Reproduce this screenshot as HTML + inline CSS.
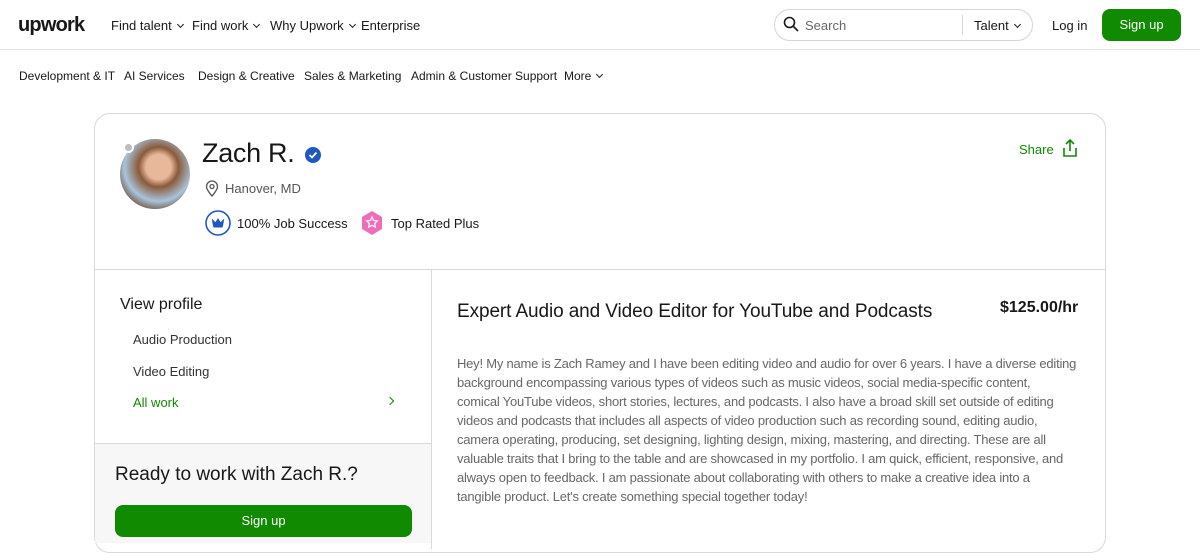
<!DOCTYPE html>
<html><head><meta charset="utf-8"><style>
*{box-sizing:border-box;margin:0;padding:0}
body{width:1200px;height:540px;overflow:hidden;background:#fff;font-family:"Liberation Sans",Arial,sans-serif;color:#181818;position:relative}
.a{position:absolute;white-space:nowrap}
.nav{font-size:13px;color:#181818}
.chev{display:inline-block;width:5px;height:5px;border-right:1.5px solid #181818;border-bottom:1.5px solid #181818;transform:rotate(45deg);margin-left:6px;vertical-align:3px}
</style></head><body>
<div class="a" style="left:18px;top:14px;font-size:20px;font-weight:bold;letter-spacing:-0.8px">upwork</div>
<div class="a nav" style="left:111px;top:18px">Find talent<span class="chev"></span></div>
<div class="a nav" style="left:192px;top:18px">Find work<span class="chev"></span></div>
<div class="a nav" style="left:270px;top:18px">Why Upwork<span class="chev"></span></div>
<div class="a nav" style="left:361px;top:18px">Enterprise</div>
<div class="a" style="left:774px;top:9px;width:259px;height:32px;border:1px solid #d5d5d5;border-radius:16px"></div>
<svg class="a" style="left:783px;top:16px" width="16" height="16" viewBox="0 0 16 16"><circle cx="6.5" cy="6.5" r="5" fill="none" stroke="#181818" stroke-width="1.6"/><path d="M10.5 10.5L15 15" stroke="#181818" stroke-width="1.6"/></svg>
<div class="a nav" style="left:805px;top:18px;color:#676767">Search</div>
<div class="a" style="left:962px;top:15px;width:1px;height:20px;background:#d5d5d5"></div>
<div class="a nav" style="left:974px;top:18px">Talent<span class="chev"></span></div>
<div class="a nav" style="left:1052px;top:18px">Log in</div>
<div class="a" style="left:1102px;top:9px;width:79px;height:32px;background:#108a00;border-radius:8px;color:#fff;font-size:13px;text-align:center;line-height:32px">Sign up</div>
<div class="a" style="left:0;top:49px;width:1200px;height:1px;background:#e4e4e4"></div>
<div class="a nav" style="left:19px;top:69px;font-size:12px">Development &amp; IT</div>
<div class="a nav" style="left:124px;top:69px;font-size:12px">AI Services</div>
<div class="a nav" style="left:198px;top:69px;font-size:12px">Design &amp; Creative</div>
<div class="a nav" style="left:304px;top:69px;font-size:12px">Sales &amp; Marketing</div>
<div class="a nav" style="left:411px;top:69px;font-size:12px">Admin &amp; Customer Support</div>
<div class="a nav" style="left:564px;top:69px;font-size:12px">More<span class="chev"></span></div>

<div class="a" style="left:94px;top:113px;width:1012px;height:440px;border:1px solid #d9d9d9;border-radius:16px"></div>
<div class="a" style="left:120px;top:139px;width:70px;height:70px;border-radius:50%;background:radial-gradient(circle at 55% 40%,#e8b89a 0 22%,#8a5a3a 35%,#a8c4dc 60%,#6b4a30 80%)"></div>
<div class="a" style="left:123px;top:142px;width:11px;height:11px;border-radius:50%;background:#bdbdbd;border:2px solid #fff"></div>
<div class="a" style="left:202px;top:138px;font-size:27px;letter-spacing:-0.3px">Zach R.</div>
<svg class="a" style="left:304px;top:146px" width="18" height="18" viewBox="0 0 18 18"><circle cx="9" cy="9" r="8" fill="#1f57c3"/><path d="M5.5 9l2.5 2.5 4.5-5" stroke="#fff" stroke-width="1.8" fill="none"/></svg>
<svg class="a" style="left:205px;top:180px" width="14" height="17" viewBox="0 0 14 17"><path d="M7 16S1.5 10 1.5 6.5a5.5 5.5 0 0111 0C12.5 10 7 16 7 16z" fill="none" stroke="#555" stroke-width="1.3"/><circle cx="7" cy="6.5" r="2" fill="none" stroke="#555" stroke-width="1.3"/></svg>
<div class="a" style="left:225px;top:181px;font-size:13px;color:#555">Hanover, MD</div>
<svg class="a" style="left:205px;top:210px" width="26" height="26" viewBox="0 0 26 26"><circle cx="13" cy="13" r="12" fill="none" stroke="#1f57c3" stroke-width="1.6"/><path d="M7.5 10l3 3 2.5-4 2.5 4 3-3-1 6h-9z M8.5 17h9" fill="#1f57c3" stroke="#1f57c3" stroke-width="1"/></svg>
<div class="a" style="left:237px;top:216px;font-size:13px">100% Job Success</div>
<svg class="a" style="left:360px;top:210px" width="24" height="26" viewBox="0 0 24 26"><path d="M12 1l10 6v12l-10 6L2 19V7z" fill="#ee6cb8"/><path d="M12 7l1.6 3.5 3.8.4-2.8 2.6.8 3.7L12 15.3l-3.4 1.9.8-3.7-2.8-2.6 3.8-.4z" fill="none" stroke="#fff" stroke-width="1.2"/></svg>
<div class="a" style="left:391px;top:216px;font-size:13px">Top Rated Plus</div>
<div class="a" style="left:1019px;top:142px;font-size:13px;color:#108a00">Share</div>
<svg class="a" style="left:1060px;top:138px" width="20" height="20" viewBox="0 0 20 20"><path d="M10 2v11M6 6l4-4 4 4M4 10v8h12v-8" fill="none" stroke="#108a00" stroke-width="1.6"/></svg>

<div class="a" style="left:95px;top:269px;width:1010px;height:1px;background:#d9d9d9"></div>
<div class="a" style="left:431px;top:269px;width:1px;height:280px;background:#d9d9d9"></div>
<div class="a" style="left:120px;top:296px;font-size:16px">View profile</div>
<div class="a" style="left:133px;top:332px;font-size:13px;color:#333">Audio Production</div>
<div class="a" style="left:133px;top:364px;font-size:13px;color:#333">Video Editing</div>
<div class="a" style="left:133px;top:395px;font-size:13px;color:#108a00">All work</div>
<div class="a" style="left:387px;top:398px;width:6px;height:6px;border-right:1.5px solid #108a00;border-top:1.5px solid #108a00;transform:rotate(45deg)"></div>
<div class="a" style="left:95px;top:443px;width:336px;height:100px;background:#f7f7f7;border-top:1px solid #d9d9d9"></div>
<div class="a" style="left:115px;top:464px;font-size:19px">Ready to work with Zach R.?</div>
<div class="a" style="left:115px;top:505px;width:297px;height:32px;background:#108a00;border-radius:8px;color:#fff;font-size:13px;text-align:center;line-height:32px">Sign up</div>

<div class="a" style="left:457px;top:301px;font-size:19px;letter-spacing:-0.1px">Expert Audio and Video Editor for YouTube and Podcasts</div>
<div class="a" style="left:1000px;top:299px;font-size:16px;font-weight:bold">$125.00/hr</div>
<div class="a" style="left:457px;top:354px;font-size:13px;line-height:19px;color:#676767;letter-spacing:-0.22px">Hey! My name is Zach Ramey and I have been editing video and audio for over 6 years. I have a diverse editing<br>background encompassing various types of videos such as music videos, social media-specific content,<br>comical YouTube videos, short stories, lectures, and podcasts. I also have a broad skill set outside of editing<br>videos and podcasts that includes all aspects of video production such as recording sound, editing audio,<br>camera operating, producing, set designing, lighting design, mixing, mastering, and directing. These are all<br>valuable traits that I bring to the table and are showcased in my portfolio. I am quick, efficient, responsive, and<br>always open to feedback. I am passionate about collaborating with others to make a creative idea into a<br>tangible product. Let's create something special together today!</div>
</body></html>
